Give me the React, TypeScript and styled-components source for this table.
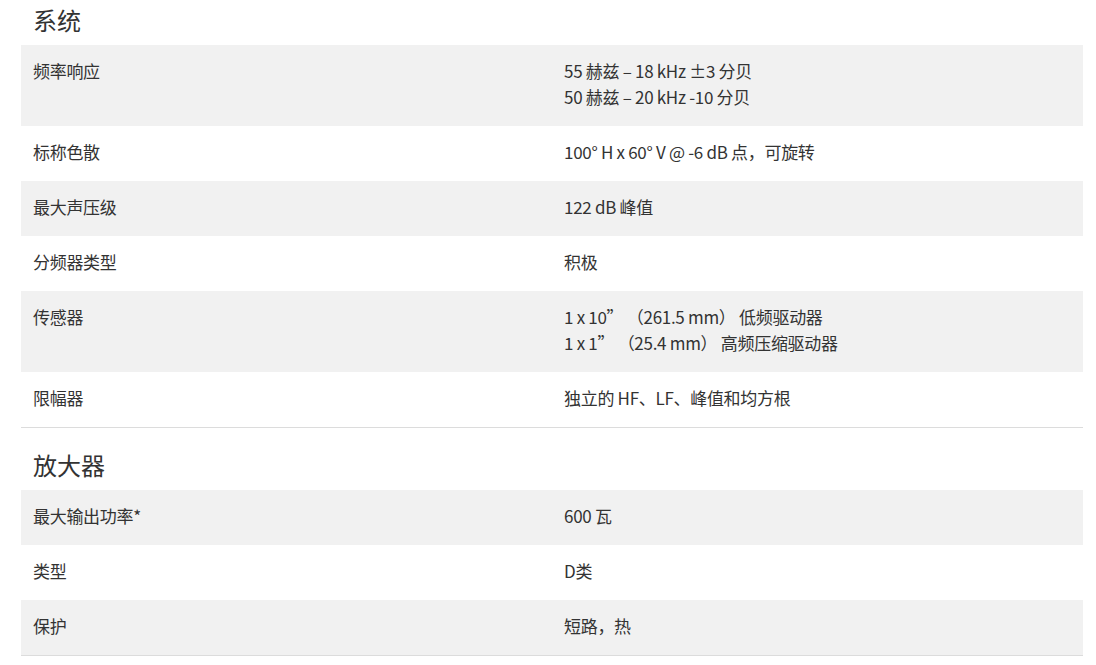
import React from 'react'
import styled, { createGlobalStyle } from 'styled-components'

const GlobalStyle = createGlobalStyle`
  body {
    margin: 0;
    background: #fff;
    font-family: "Noto Sans CJK SC", "Noto Sans", sans-serif;
    color: #333;
  }
`

const Page = styled.div`
  padding: 0 13px 0 21px;
`

const Section = styled.section`
  & + & {
    margin-top: 17px;
  }
`

const SectionTitle = styled.h3`
  margin: 0;
  padding: 5px 12px 10px;
  font-size: 24px;
  line-height: 30px;
  font-weight: 400;
  color: #333;
`

const Table = styled.div`
  border-bottom: 1px solid #dcdcdc;
`

const Row = styled.div<{ $shaded: boolean }>`
  display: grid;
  grid-template-columns: 1fr 1fr;
  background: ${p => (p.$shaded ? '#f1f1f1' : '#fff')};
  padding: 13px 0 16px;
  font-size: 17px;
  line-height: 26px;
  letter-spacing: -0.3px;
`

const Cell = styled.div`
  padding: 0 12px;
`

type Spec = { label: string; values: string[] }

const system: Spec[] = [
  { label: '频率响应', values: ['55 赫兹 – 18 kHz ±3 分贝', '50 赫兹 – 20 kHz -10 分贝'] },
  { label: '标称色散', values: ['100° H x 60° V @ -6 dB 点，可旋转'] },
  { label: '最大声压级', values: ['122 dB 峰值'] },
  { label: '分频器类型', values: ['积极'] },
  { label: '传感器', values: ['1 x 10” （261.5 mm） 低频驱动器', '1 x 1” （25.4 mm） 高频压缩驱动器'] },
  { label: '限幅器', values: ['独立的 HF、LF、峰值和均方根'] },
]

const amplifier: Spec[] = [
  { label: '最大输出功率*', values: ['600 瓦'] },
  { label: '类型', values: ['D类'] },
  { label: '保护', values: ['短路，热'] },
]

const SpecSection = ({ title, specs }: { title: string; specs: Spec[] }) => (
  <Section>
    <SectionTitle>{title}</SectionTitle>
    <Table>
      {specs.map((s, i) => (
        <Row key={s.label} $shaded={i % 2 === 0}>
          <Cell>{s.label}</Cell>
          <Cell>
            {s.values.map(v => (
              <div key={v}>{v}</div>
            ))}
          </Cell>
        </Row>
      ))}
    </Table>
  </Section>
)

export default function App() {
  return (
    <>
      <GlobalStyle />
      <Page>
        <SpecSection title="系统" specs={system} />
        <SpecSection title="放大器" specs={amplifier} />
      </Page>
    </>
  )
}
